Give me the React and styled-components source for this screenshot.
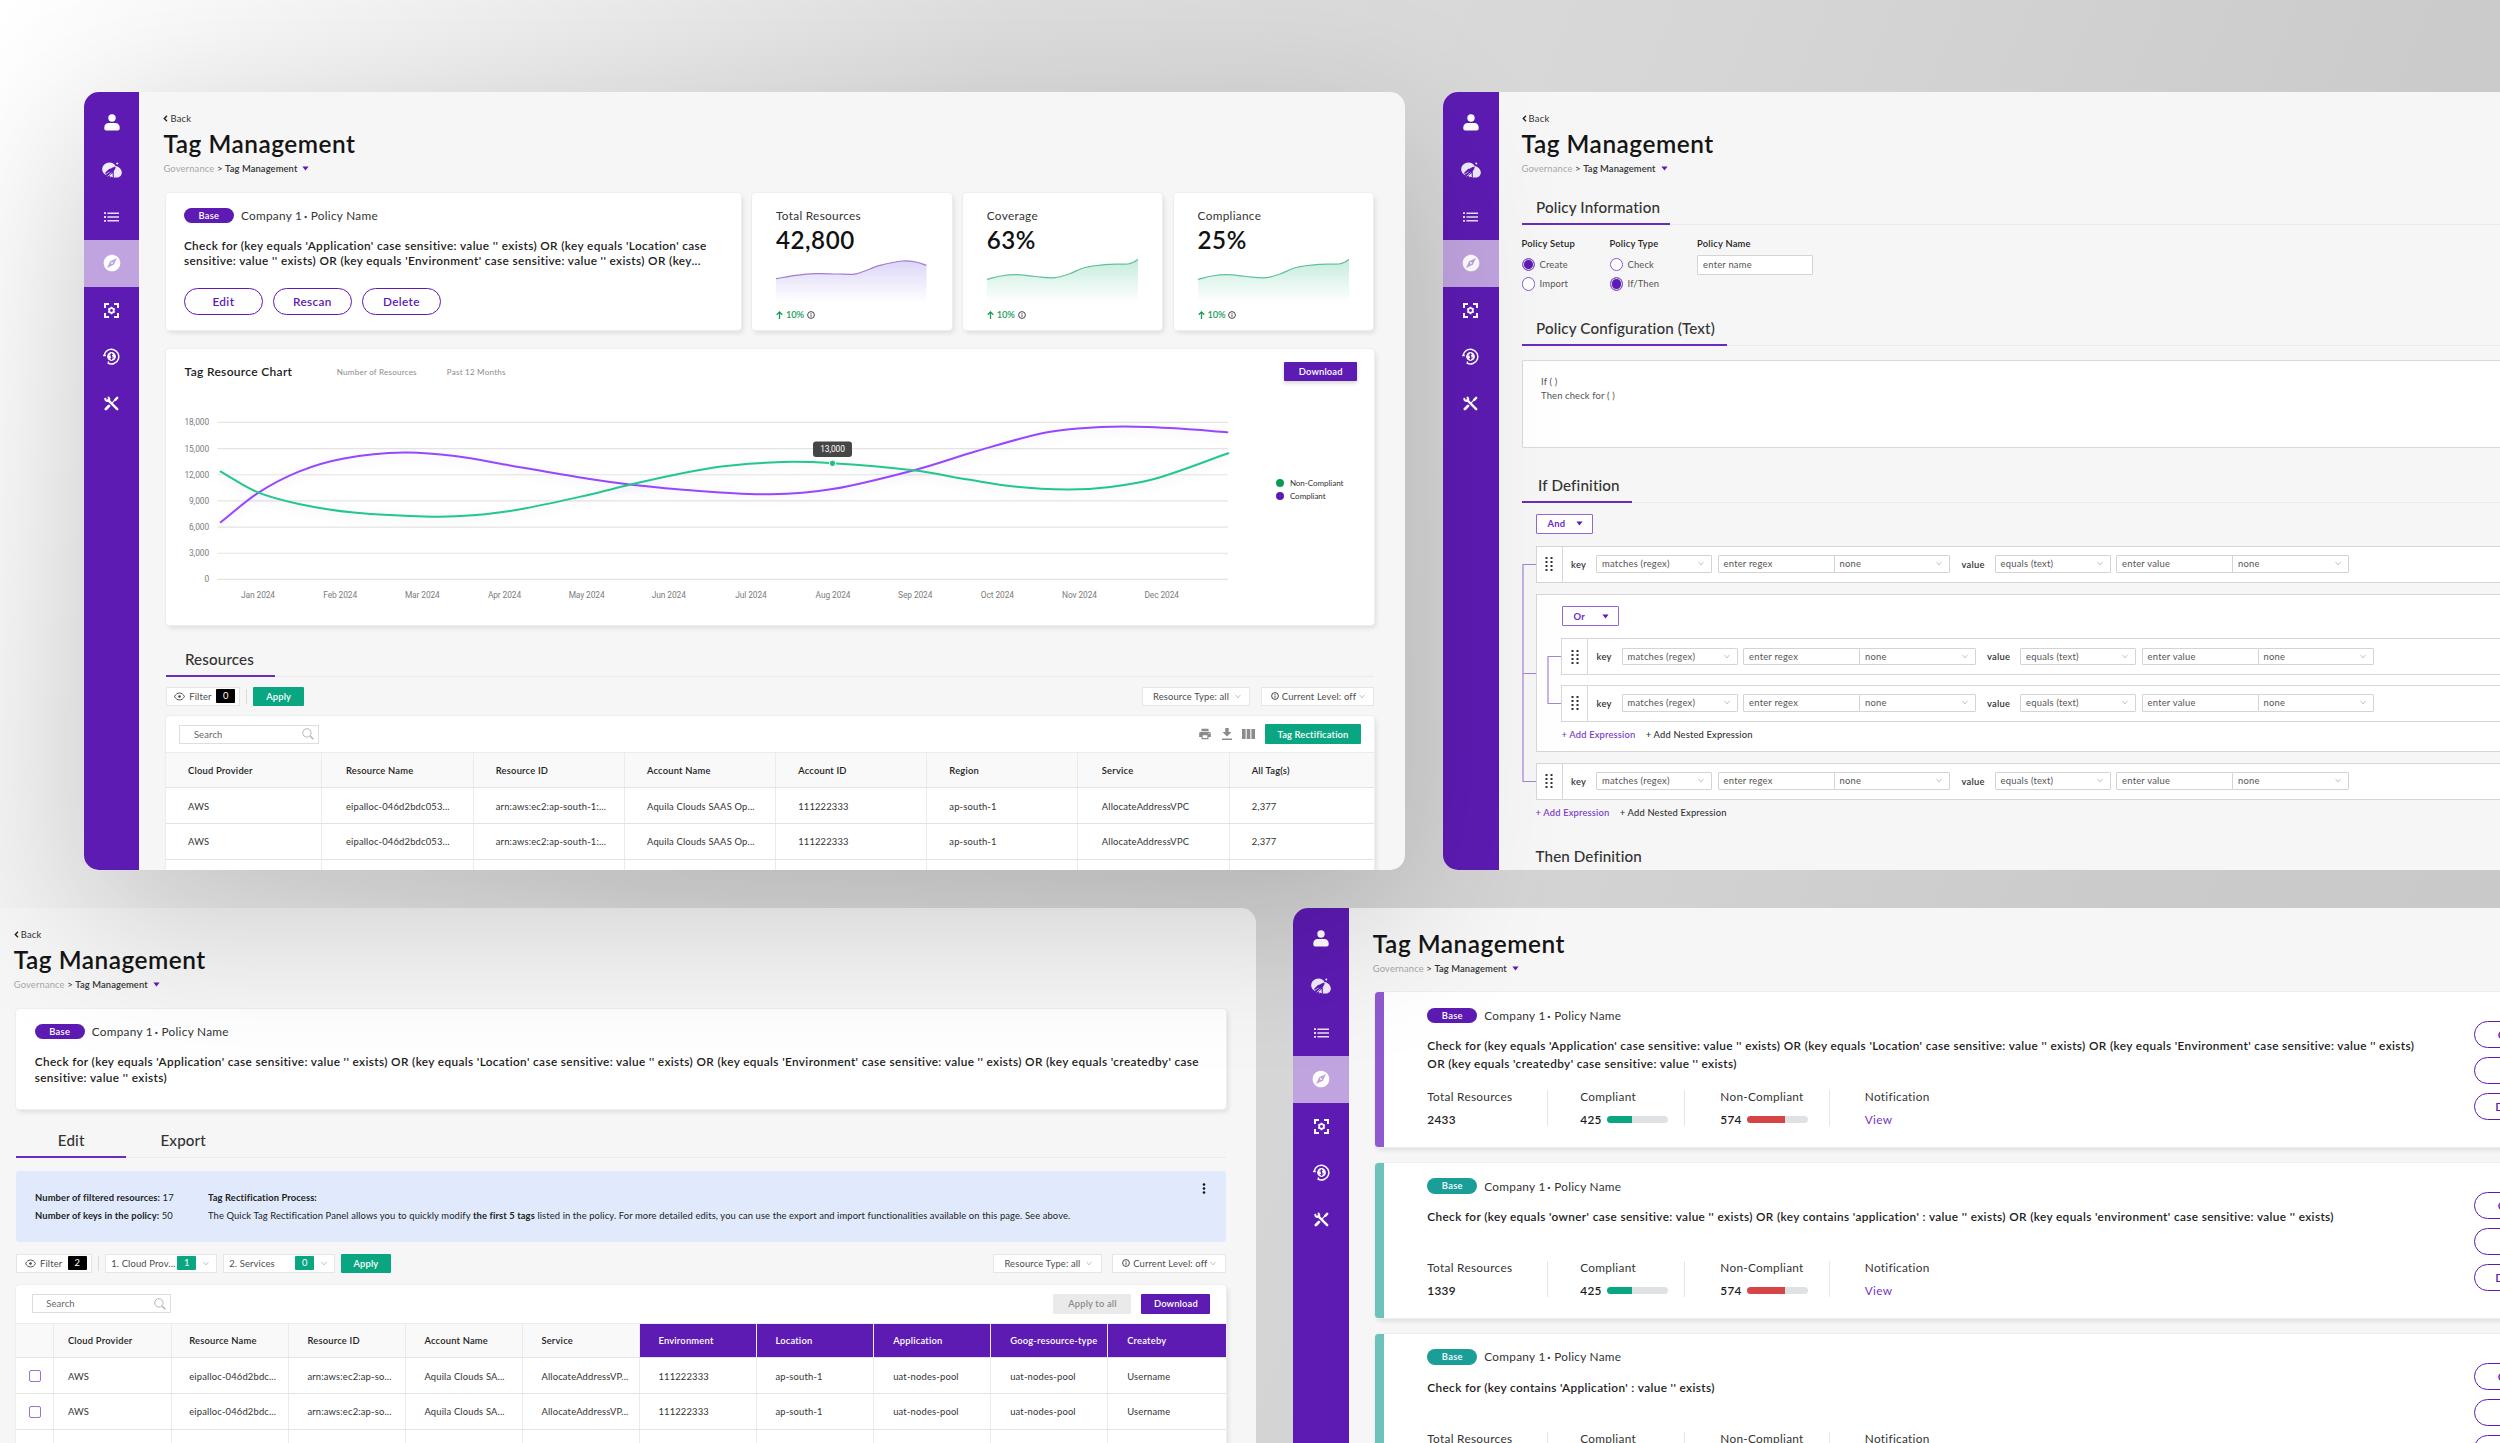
import React from "react";
import styled, { createGlobalStyle, css } from "styled-components";
import { MdExplore, MdPrint } from "react-icons/md";

const PURPLE = "#5d1bb3";
const GREEN = "#0aa682";
const TEAL = "#1b9e98";

const greenTrend = [[0, 23.3], [14, 20], [29, 18.7], [48, 20.5], [68, 21.7], [82, 18], [98, 11.5], [123, 8.3], [141, 8], [147, 6], [151, 3.3]];

const stats = [
  {
    label: "Total Resources",
    value: "42,800",
    id: "total",
    line: "#a07ad6",
    fill: "#dcd6f7",
    points: [[0, 22.7], [20, 19.3], [40, 17.7], [62, 18], [80, 17.8], [103, 9.7], [126, 5], [140, 6], [150.5, 9.3]],
  },
  { label: "Coverage", value: "63%", id: "coverage", line: "#5fc296", fill: "#c5ecdd", points: greenTrend },
  { label: "Compliance", value: "25%", id: "compliance", line: "#5fc296", fill: "#c5ecdd", points: greenTrend },
];

const compliant = [
  [220.7, 523.2], [257.4, 494.3], [298.8, 472.6], [344, 459.5], [404.4, 453.6], [454.9, 457.1], [510, 466.4],
  [588, 479.8], [631.6, 485.7], [693.6, 491.5], [770.5, 495.3], [832.5, 490.1], [915.1, 470.9], [977, 452],
  [1041, 434.5], [1078, 429.4], [1124, 427.5], [1179, 429.5], [1227.3, 433.3],
];
const nonCompliant = [
  [220.7, 472.6], [257.4, 493.2], [298.8, 505], [353.8, 513.6], [432, 517.7], [473, 516.3], [519, 510.5], [588, 496],
  [631.6, 485.3], [675.2, 475.7], [721.2, 467.4], [782, 463], [832.5, 464.3], [915.1, 471.5], [968, 480.5],
  [1014, 487.5], [1066.7, 490.5], [1110.3, 487.9], [1156, 479.5], [1228.3, 454.3],
];
const months = ["Jan", "Feb", "Mar", "Apr", "May", "Jun", "Jul", "Aug", "Sep", "Oct", "Nov", "Dec"];
const ticks = ["18,000", "15,000", "12,000", "9,000", "6,000", "3,000", "0"];

const resourceCols = ["Cloud Provider", "Resource Name", "Resource ID", "Account Name", "Account ID", "Region", "Service", "All Tag(s)"];
const resourceRow = ["AWS", "eipalloc-046d2bdc053...", "arn:aws:ec2:ap-south-1:...", "Aquila Clouds SAAS Op...", "111222333", "ap-south-1", "AllocateAddressVPC", "2,377"];
const resourceRows = [resourceRow, resourceRow, resourceRow.map(() => "")];

const editCols = ["", "Cloud Provider", "Resource Name", "Resource ID", "Account Name", "Service", "Environment", "Location", "Application", "Goog-resource-type", "Createby"];
const editRow = ["", "AWS", "eipalloc-046d2bdc...", "arn:aws:ec2:ap-so...", "Aquila Clouds SA...", "AllocateAddressVP...", "111222333", "ap-south-1", "uat-nodes-pool", "uat-nodes-pool", "Username"];
const editRows = [editRow, editRow, editRow.map(() => "")];

const policies = [
  {
    id: 1,
    tone: PURPLE,
    stripe: "#8f5ad0",
    total: "2433",
    text: "Check for (key equals 'Application' case sensitive: value '' exists) OR (key equals 'Location' case sensitive: value '' exists) OR (key equals 'Environment' case sensitive: value '' exists)\nOR (key equals 'createdby' case sensitive: value '' exists)",
  },
  {
    id: 2,
    tone: TEAL,
    stripe: "#6bc3bb",
    total: "1339",
    text: "Check for (key equals 'owner' case sensitive: value '' exists) OR (key contains 'application' : value '' exists) OR (key equals 'environment' case sensitive: value '' exists)",
  },
  {
    id: 3,
    tone: TEAL,
    stripe: "#6bc3bb",
    total: "1339",
    text: "Check for (key contains 'Application' : value '' exists)",
  },
];

// cubic spline through the points, slopes taken from the neighbours
const smooth = (pts) => {
  const slope = (i) => {
    const a = pts[Math.max(i - 1, 0)];
    const b = pts[Math.min(i + 1, pts.length - 1)];
    return (b[1] - a[1]) / (b[0] - a[0]);
  };
  let d = `M${pts[0][0]},${pts[0][1]}`;
  for (let i = 0; i < pts.length - 1; i++) {
    const [x1, y1] = pts[i];
    const [x2, y2] = pts[i + 1];
    const dx = (x2 - x1) / 3;
    d += ` C${x1 + dx},${y1 + slope(i) * dx} ${x2 - dx},${y2 - slope(i + 1) * dx} ${x2},${y2}`;
  }
  return d;
};

/* ---------- icons ---------- */

const PersonIcon = () => (
  <svg width="16" height="17" viewBox="0 0 16 17" fill="#fff">
    <circle cx="8" cy="4" r="3.7" />
    <path d="M.3 13.3C.3 10.8 2.3 9 4.5 9h7c2.200 0 4.200 1.800 4.200 4.300v1.200c0 1.300-.9 2-2 2H2.300c-1.100 0-2-.7-2-2z" />
  </svg>
);

const CloudRocketIcon = () => (
  <svg width="20" height="16" viewBox="0 0 20 16">
    <path fill="#f1eafa" d="M5.500 13.500C2.500 13 .2 10.400.2 7.300.2 3.400 3.500.4 7.500.4c2.800 0 5 1.300 6 3.500C17 4.600 19.800 7 19.800 10.400c0 3-2.300 5.100-5.200 5.100H12z" />
    <path fill={PURPLE} d="M3.200 10.700 7 7l2-.4c1.500-1.300 3-1.800 4.600-1.800 0 1.500-.6 3-1.900 4.400l.2 6.300H11l-.7-4.300-3.600 3-2-.2L3.500 12z" />
    <path stroke="#f1eafa" strokeWidth="0.7" d="M3.500 12.500l4-2.500M5.500 14.500l4-4M8.300 15.500l2.200-4" />
    <circle cx="15.300" cy="1.500" r="1" fill="#f1eafa" />
  </svg>
);

const ListIcon = () => (
  <svg width="15" height="10" viewBox="0 0 15 10" fill="#e9dff7">
    <path d="M0 .3h2v1.800H0zM0 4.100h2v1.800H0zM0 7.900h2v1.800H0zM3.400.4H15V2H3.400zM3.400 4.200H15v1.600H3.400zM3.400 8H15v1.600H3.400z" />
  </svg>
);

const FocusGearIcon = () => (
  <svg width="15" height="15" viewBox="0 0 15 15" fill="none" stroke="#fff">
    <path strokeWidth="2" d="M1 5V1h4M10 1h4v4M14 10v4h-4M5 14H1v-4" />
    <circle cx="7.500" cy="7.500" r="2.300" strokeWidth="1.700" />
    <path strokeWidth="1.500" d="M7.500 3.700v1.500M7.500 9.800v1.500M4.200 5.600l1.300.75M9.500 8.650l1.300.75M4.200 9.400l1.300-.75M9.500 6.350l1.300-.75" />
  </svg>
);

const CoinIcon = () => (
  <svg width="17" height="17" viewBox="0 0 17 17" fill="none" stroke="#fff">
    <path strokeWidth="1.500" d="M1 7.800A7.400 7.400 0 1 1 5 15.200" />
    <path strokeWidth="1.500" d="M.2 7.600h2.600M5.400 13.600v2.300" />
    <circle cx="8.500" cy="8.500" r="4.400" fill="#fff" stroke="none" />
    <path stroke={PURPLE} strokeWidth="1" d="M10 6.900c-.3-.6-.9-.8-1.500-.8-.8 0-1.500.4-1.500 1.100 0 1.600 3.100.9 3.100 2.500 0 .8-.8 1.200-1.600 1.200-.7 0-1.400-.3-1.600-.9M8.500 5.300v6.500" />
  </svg>
);

const ToolsIcon = () => (
  <svg width="15" height="15" viewBox="0 0 15 15" fill="none" stroke="#fff" strokeLinecap="round">
    <path strokeWidth="2.400" d="M4.200 4.200l9 9" />
    <path strokeWidth="2" d="M1.300 2.800c.2 1.600 1.200 2.500 2.600 2.200 1.400-.3 2-2 .6-3.500" />
    <path strokeWidth="2.800" d="M1.900 13.100l3-3" />
    <path strokeWidth="1.300" d="M8.600 6.400l2.600-2.600" />
    <path strokeWidth="2.400" d="M11.200 3.800l2-2" />
  </svg>
);

const EyeIcon = () => (
  <svg width="11" height="9" viewBox="0 0 11 9" fill="none" stroke="#444" strokeWidth="0.9">
    <path d="M.6 4.500C2.500-.1 8.500-.1 10.400 4.500 8.500 9.100 2.500 9.100.6 4.500z" />
    <circle cx="5.500" cy="4.500" r="1.300" fill="#444" stroke="none" />
  </svg>
);

const InfoIcon = () => (
  <svg width="8" height="8" viewBox="0 0 8 8" fill="none" stroke="#333" strokeWidth="0.9">
    <circle cx="4" cy="4" r="3.400" />
    <path d="M4 3.500v2.300M4 2v.8" />
  </svg>
);

const SearchIcon = () => (
  <svg width="12" height="12" viewBox="0 0 12 12" fill="none" stroke="#b5b5b5" strokeWidth="1">
    <circle cx="4.900" cy="4.900" r="4.200" />
    <path strokeWidth="1.500" d="M8 8l3.300 3.300" />
  </svg>
);

const ChevronIcon = () => (
  <svg width="6" height="5" viewBox="0 0 6 5" fill="none" stroke="#bdbdbd" strokeWidth="0.9">
    <path d="M.5.8L3 4 5.500.8" />
  </svg>
);

const CaretIcon = () => (
  <svg width="7" height="5" viewBox="0 0 7 5" fill={PURPLE}>
    <path d="M.4.4h6.200L3.500 4.500z" />
  </svg>
);

const BackIcon = () => (
  <svg width="5" height="7" viewBox="0 0 5 7" fill="none" stroke="#222" strokeWidth="1.400">
    <path d="M4 .8L1.300 3.500 4 6.200" />
  </svg>
);

const UpIcon = () => (
  <svg width="7" height="8" viewBox="0 0 7 8" fill="none" stroke="#1c9c5b" strokeWidth="1.300">
    <path d="M3.500 8V1M.7 3.700L3.500 1l2.800 2.700" />
  </svg>
);

const DownloadIcon = () => (
  <svg width="10" height="12" viewBox="0 0 10 12" fill="#8b8b8b">
    <path d="M3.300 0h3.400v4H9.500L5 8.600.5 4h2.800zM0 10.500h10V12H0z" />
  </svg>
);

const ColumnsIcon = () => (
  <svg width="13" height="10" viewBox="0 0 13 10" fill="#8b8b8b">
    <path d="M0 0h3.600v10H0zM4.700 0h3.600v10H4.700zM9.400 0H13v10H9.400z" />
  </svg>
);

const GripIcon = () => (
  <svg width="8" height="14" viewBox="0 0 8 14" fill="#333">
    {[1, 5, 9, 13].map((y) => (
      <React.Fragment key={y}>
        <rect x="0.500" y={y - 1} width="2" height="2" />
        <rect x="5.500" y={y - 1} width="2" height="2" />
      </React.Fragment>
    ))}
  </svg>
);

const KebabIcon = () => (
  <svg width="4" height="11" viewBox="0 0 4 11" fill="#111">
    <circle cx="2" cy="1.500" r="1.300" />
    <circle cx="2" cy="5.500" r="1.300" />
    <circle cx="2" cy="9.500" r="1.300" />
  </svg>
);

const Connector = ({ height, stops }) => (
  <svg width="14" height={height} viewBox={`0 0 14 ${height}`} fill="none" stroke="#a583d6" strokeWidth="1.200">
    <path d={`M1 ${stops[0]}V${stops[stops.length - 1]}` + stops.map((y) => `M.4 ${y}H14`).join("")} />
  </svg>
);

/* ---------- shared pieces ---------- */

const Sidebar = () => (
  <Rail>
    <RailItem><PersonIcon /></RailItem>
    <RailItem><CloudRocketIcon /></RailItem>
    <RailItem><ListIcon /></RailItem>
    <RailItem $active><MdExplore size={20} color="#fff" /></RailItem>
    <RailItem><FocusGearIcon /></RailItem>
    <RailItem><CoinIcon /></RailItem>
    <RailItem><ToolsIcon /></RailItem>
  </Rail>
);

const PageHeader = ({ back = true, inset }) => (
  <Header $inset={inset}>
    {back && (
      <Back>
        <BackIcon /> Back
      </Back>
    )}
    <Title>Tag Management</Title>
    <Crumbs>
      <span>Governance</span> &gt; <b>Tag Management</b> <CaretIcon />
    </Crumbs>
  </Header>
);

const PolicyTitle = ({ tone }) => (
  <PolicyHead>
    <Pill $tone={tone}>Base</Pill>
    <span>Company 1<b>&thinsp;·</b> Policy Name</span>
  </PolicyHead>
);

const LevelFilters = () => (
  <Filters $end>
    <Dropdown $width={108.5} $pad={10}>
      Resource Type: all <ChevronIcon />
    </Dropdown>
    <Dropdown $width={113.5} $pad={9}>
      <InfoIcon /> Current Level: off <ChevronIcon />
    </Dropdown>
  </Filters>
);

const Rule = () => (
  <RuleRow>
    <Handle><GripIcon /></Handle>
    <RuleLabel $width={25}>key</RuleLabel>
    <Field $width={116}>matches (regex) <ChevronIcon /></Field>
    <FieldPair>
      <Field $width={117}>enter regex</Field>
      <Field $width={116.5}>none <ChevronIcon /></Field>
    </FieldPair>
    <RuleLabel $width={36}>value</RuleLabel>
    <Field $width={116}>equals (text) <ChevronIcon /></Field>
    <FieldPair>
      <Field $width={117}>enter value</Field>
      <Field $width={116.5}>none <ChevronIcon /></Field>
    </FieldPair>
  </RuleRow>
);

const AddLinks = () => (
  <Links>
    <a>+ Add Expression</a>
    <span>+ Add Nested Expression</span>
  </Links>
);

/* ---------- overview ---------- */

const Sparkline = ({ id, points, line, fill }) => {
  const d = smooth(points);
  return (
    <svg width="151" height="46" viewBox="0 0 151 46">
      <defs>
        <linearGradient id={id} x1="0" y1="0" x2="0" y2="1">
          <stop offset="0" stopColor={fill} />
          <stop offset="1" stopColor="#fff" />
        </linearGradient>
      </defs>
      <path d={`${d} V46 H0 Z`} fill={`url(#${id})`} />
      <path d={d} fill="none" stroke={line} strokeWidth="1.200" />
    </svg>
  );
};

const ResourceChart = () => (
  <svg width="1072" height="230" viewBox="166 390 1072 230">
    {ticks.map((t, i) => (
      <g key={t}>
        <line x1="217.500" x2="1228" y1={423.4 + i * 26.17} y2={423.4 + i * 26.17} stroke="#e4e4e4" strokeWidth="1.200" />
        <ChartLabel x="209" y={426.4 + i * 26.17} textAnchor="end">{t}</ChartLabel>
      </g>
    ))}
    {months.map((m, i) => (
      <ChartLabel key={m} x={258 + i * 82.15} y="599.300" textAnchor="middle">{m} 2024</ChartLabel>
    ))}
    <Curve d={smooth(compliant)} stroke="#9747ff" />
    <Curve d={smooth(nonCompliant)} stroke="#22c78c" />
    <circle cx="832.500" cy="464.300" r="3.200" fill="#1dc186" stroke="#fff" strokeWidth="1" />
    <rect x="813" y="442.500" width="39" height="15.500" rx="3" fill="#464646" />
    <ChartLabel x="832.500" y="453.400" textAnchor="middle" $light>13,000</ChartLabel>
  </svg>
);

const OverviewWindow = () => (
  <Window $width={1320.5} $top>
    <Sidebar />
    <Content>
      <PageHeader />
      <SummaryGrid>
        <Card $pad="14.500px 18px 0">
          <PolicyTitle tone={PURPLE} />
          <PolicyText $lead={15.4}>
            {"Check for (key equals 'Application' case sensitive: value '' exists) OR (key equals 'Location' case\nsensitive: value '' exists) OR (key equals 'Environment' case sensitive: value '' exists) OR (key..."}
          </PolicyText>
          <ButtonRow>
            <OutlineButton>Edit</OutlineButton>
            <OutlineButton>Rescan</OutlineButton>
            <OutlineButton>Delete</OutlineButton>
          </ButtonRow>
        </Card>
        {stats.map((s) => (
          <Card key={s.id} $pad="15px 23.800px 0">
            <StatName>{s.label}</StatName>
            <StatValue>{s.value}</StatValue>
            <Sparkline {...s} />
            <Delta>
              <UpIcon /> 10% <InfoIcon />
            </Delta>
          </Card>
        ))}
      </SummaryGrid>
      <ChartCard>
        <ChartHead>
          <h3>Tag Resource Chart</h3>
          <ChartNote $gap={44.5} $width={110}>Number of Resources</ChartNote>
          <ChartNote $gap={0} $width={80}>Past 12 Months</ChartNote>
          <SolidButton $tone={PURPLE} $width={72.5} $push $raised>Download</SolidButton>
        </ChartHead>
        <ChartBody>
          <ResourceChart />
          <Legend>
            <LegendItem $tone="#0b9b52">Non-Compliant</LegendItem>
            <LegendItem $tone={PURPLE}>Compliant</LegendItem>
          </Legend>
        </ChartBody>
      </ChartCard>
      <Tabs $gap={18}>
        <Tab $active $width={109.5} $pad={19}>Resources</Tab>
      </Tabs>
      <FilterBar $gap={9.5}>
        <Filters>
          <Dropdown $width={74.5} $pad={7.5}>
            <EyeIcon /> <FilterName>Filter</FilterName> <Count $tone="#000">0</Count>
          </Dropdown>
          <Divider />
          <SolidButton $tone={GREEN} $width={50.5}>Apply</SolidButton>
        </Filters>
        <LevelFilters />
      </FilterBar>
      <TableCard $gap={9.8}>
        <TableTools $height={36.5} $pad={13.5}>
          <Search><span>Search</span><SearchIcon /></Search>
          <ToolIcons>
            <MdPrint size={14} color="#8b8b8b" />
            <DownloadIcon />
            <ColumnsIcon />
            <SolidButton $tone={GREEN} $width={96}>Tag Rectification</SolidButton>
          </ToolIcons>
        </TableTools>
        <Row $cols="156.500px repeat(6, 151.200px) 1fr" $head>
          {resourceCols.map((c, i) => <Cell key={c} $head $pad={[1, 6].includes(i) ? 23.5 : 22.2}>{c}</Cell>)}
        </Row>
        {resourceRows.map((row, r) => (
          <Row key={r} $cols="156.500px repeat(6, 151.200px) 1fr">
            {row.map((c, i) => <Cell key={i} $pad={[1, 6].includes(i) ? 23.5 : 22.2}>{c}</Cell>)}
          </Row>
        ))}
      </TableCard>
    </Content>
  </Window>
);

/* ---------- policy form ---------- */

const PolicyFormWindow = () => (
  <Window $width={1320.5}>
    <Sidebar />
    <Content $left={23}>
      <PageHeader inset />
      <Tabs $gap={16}>
        <Tab $active $width={148} $pad={14.5}>Policy Information</Tab>
      </Tabs>
      <FormGrid>
        <FormColumn>
          <FormLabel>Policy Setup</FormLabel>
          <Radio $checked>Create</Radio>
          <Radio>Import</Radio>
        </FormColumn>
        <FormColumn>
          <FormLabel>Policy Type</FormLabel>
          <Radio>Check</Radio>
          <Radio $checked>If/Then</Radio>
        </FormColumn>
        <FormColumn>
          <FormLabel>Policy Name</FormLabel>
          <Field $width={115.5} $height={19.5}>enter name</Field>
        </FormColumn>
      </FormGrid>
      <Tabs>
        <Tab $active $width={205} $pad={14.5}>Policy Configuration (Text)</Tab>
      </Tabs>
      <TextBox>
        If ( )
        <br />
        Then check for ( )
      </TextBox>
      <Tabs $gap={21.5}>
        <Tab $active $width={110.5} $pad={16.5}>If Definition</Tab>
      </Tabs>
      <Indent>
        <LogicSelect>And <CaretIcon /></LogicSelect>
      </Indent>
      <RuleGroup>
        <Connector height={254} stops={[18.5, 127.500, 235.500]} />
        <RuleStack>
          <Rule />
          <NestedBox>
            <LogicSelect>Or <CaretIcon /></LogicSelect>
            <NestedGroup>
              <Connector height={83.5} stops={[18.5, 65.5]} />
              <RuleStack $gap={9.5}>
                <Rule />
                <Rule />
              </RuleStack>
            </NestedGroup>
            <AddLinks />
          </NestedBox>
          <Rule />
        </RuleStack>
      </RuleGroup>
      <Indent $flat>
        <AddLinks />
        <SectionTitle>Then Definition</SectionTitle>
      </Indent>
    </Content>
  </Window>
);

/* ---------- tag rectification ---------- */

const EDIT_GRID = "38.200px 118px repeat(8, 117px) 1fr";
const EDIT_PADS = [12.5, 13.5, 16.8, 18, 18, 18, 18, 18, 18.8, 18.8, 18.8];

const RectificationWindow = () => (
  <Window $width={1321.6}>
    <Sidebar />
    <Content>
      <PageHeader />
      <BannerCard>
        <PolicyTitle tone={PURPLE} />
        <PolicyText $lead={16.6}>
          {"Check for (key equals 'Application' case sensitive: value '' exists) OR (key equals 'Location' case sensitive: value '' exists) OR (key equals 'Environment' case sensitive: value '' exists) OR (key equals 'createdby' case\nsensitive: value '' exists)"}
        </PolicyText>
      </BannerCard>
      <Tabs $gap={15}>
        <Tab $active $width={110} $center>Edit</Tab>
        <Tab $width={114} $center>Export</Tab>
      </Tabs>
      <InfoPanel>
        <div>
          <p><b>Number of filtered resources:</b> 17</p>
          <p><b>Number of keys in the policy:</b> 50</p>
        </div>
        <div>
          <p><b>Tag Rectification Process:</b></p>
          <p>
            The Quick Tag Rectification Panel allows you to quickly modify <b>the first 5 tags</b> listed in the policy. For more detailed edits, you can use the export and import functionalities available on this page. See above.
          </p>
        </div>
        <KebabIcon />
      </InfoPanel>
      <FilterBar $gap={12}>
        <Filters>
          <Dropdown $width={75.5} $pad={7.5}>
            <EyeIcon /> <FilterName>Filter</FilterName> <Count $tone="#000">2</Count>
          </Dropdown>
          <Divider />
          <Dropdown $width={112} $pad={5.5} $wide>
            1. Cloud Prov... <Count $tone={GREEN}>1</Count> <ChevronIcon />
          </Dropdown>
          <Dropdown $width={112} $pad={5.5} $wide>
            2. Services <Count $tone={GREEN}>0</Count> <ChevronIcon />
          </Dropdown>
          <SolidButton $tone={GREEN} $width={50.5}>Apply</SolidButton>
        </Filters>
        <LevelFilters />
      </FilterBar>
      <TableCard $gap={12}>
        <TableTools $height={37.5} $pad={15.5}>
          <Search><span>Search</span><SearchIcon /></Search>
          <ToolIcons>
            <SolidButton $tone="#eaeaea" $ink="#8b8b8b" $width={78}>Apply to all</SolidButton>
            <SolidButton $tone={PURPLE} $width={69}>Download</SolidButton>
          </ToolIcons>
        </TableTools>
        <Row $cols={EDIT_GRID} $head>
          {editCols.map((c, i) => (
            <Cell key={i} $head $accent={i > 5} $pad={EDIT_PADS[i]}>{c}</Cell>
          ))}
        </Row>
        {editRows.map((row, r) => (
          <Row key={r} $cols={EDIT_GRID}>
            {row.map((c, i) => (
              <Cell key={i} $pad={EDIT_PADS[i]}>{i === 0 && r < 2 ? <Checkbox /> : c}</Cell>
            ))}
          </Row>
        ))}
      </TableCard>
    </Content>
  </Window>
);

/* ---------- policy list ---------- */

const PolicyListWindow = () => (
  <Window $width={1321}>
    <Sidebar />
    <Content>
      <PageHeader back={false} />
      <PolicyList>
        {policies.map((p) => (
          <PolicyCard key={p.id} $stripe={p.stripe}>
            <PolicyMain>
              <PolicyTitle tone={p.tone} />
              <PolicyText $lead={18} $lines={2}>{p.text}</PolicyText>
              <PolicyStats>
                <PolicyStat $width={120.5}>
                  Total Resources <b>{p.total}</b>
                </PolicyStat>
                <PolicyStat $width={137.5} $pad={32.5}>
                  Compliant
                  <b>425 <Meter $tone={GREEN} $part={41} /></b>
                </PolicyStat>
                <PolicyStat $width={144.5} $pad={35}>
                  Non-Compliant
                  <b>574 <Meter $tone="#d64545" $part={62} /></b>
                </PolicyStat>
                <PolicyStat $width={120} $pad={35} $last>
                  Notification <a>View</a>
                </PolicyStat>
              </PolicyStats>
            </PolicyMain>
            <PolicyActions>
              <OutlineButton>Clone</OutlineButton>
              <OutlineButton>Edit</OutlineButton>
              <OutlineButton>Delete</OutlineButton>
            </PolicyActions>
          </PolicyCard>
        ))}
      </PolicyList>
    </Content>
  </Window>
);

export default function App() {
  return (
    <>
      <GlobalStyle />
      <Desktop>
        <WindowRow $left={84} $gap={38.7}>
          <OverviewWindow />
          <PolicyFormWindow />
        </WindowRow>
        <WindowRow $left={-65.7} $gap={37.5}>
          <RectificationWindow />
          <PolicyListWindow />
        </WindowRow>
      </Desktop>
    </>
  );
}

/* ---------- styles ---------- */

const GlobalStyle = createGlobalStyle`
  * {
    box-sizing: border-box;
  }

  body {
    margin: 0;
    overflow: hidden;
    font-family: Lato, "Open Sans", sans-serif;
    font-size: 9.4px;
    letter-spacing: 0.15px;
    color: #333;
  }

  h1, h2, h3, p {
    margin: 0;
  }

  svg {
    display: block;
    flex: none;
  }
`;

const Desktop = styled.main`
  display: flex;
  flex-direction: column;
  gap: 38px;
  width: 2500px;
  height: 1443px;
  padding-top: 92px;
  overflow: hidden;
  background: linear-gradient(112deg, #fff 0%, #dddddd 33%, #d6d6d6 56%, #cbcbcb 80%, #c8c8c8 100%);
`;

const WindowRow = styled.div`
  display: flex;
  flex: none;
  gap: ${(p) => p.$gap}px;
  margin-left: ${(p) => p.$left}px;
`;

const Window = styled.section`
  display: flex;
  flex: none;
  position: relative;
  width: ${(p) => p.$width}px;
  height: 778px;
  border-radius: 15px;
  overflow: hidden;
  background: #f6f6f6;
  ${(p) =>
    p.$top &&
    css`
      z-index: 2;
      box-shadow: 0 45px 160px rgba(0, 0, 0, 0.18);
    `}
`;

const Rail = styled.nav`
  flex: none;
  width: 55.4px;
  padding-top: 7.6px;
  background: ${PURPLE};
`;

const RailItem = styled.div`
  display: flex;
  align-items: center;
  justify-content: center;
  height: 46.8px;
  background: ${(p) => (p.$active ? "#c0a4e0" : "transparent")};
`;

const Content = styled.div`
  flex: none;
  width: calc(100% - 55.4px);
  padding: 18px 30px 0 ${(p) => p.$left || 26.5}px;
`;

const Header = styled.header`
  margin-left: ${(p) => (p.$inset ? 0 : -2.5)}px;
`;

const Back = styled.div`
  display: flex;
  align-items: center;
  gap: 2px;
  height: 16px;
  letter-spacing: 0.25px;
`;

const Title = styled.h1`
  height: 36px;
  line-height: 36px;
  font-size: 24.4px;
  font-weight: 600;
  letter-spacing: 0.52px;
  color: #151515;
`;

const Crumbs = styled.div`
  display: flex;
  align-items: center;
  gap: 2.5px;
  height: 13px;
  margin-bottom: 1px;

  span {
    color: #a8a8a8;
  }

  b {
    font-weight: 600;
    letter-spacing: 0.1px;
    margin-right: 2.5px;
  }
`;

const panel = css`
  background: #fff;
  border-radius: 3.5px;
  box-shadow: 0 0 0 1px #eeeeee, 2px 3px 5px rgba(0, 0, 0, 0.1);
`;

const Card = styled.div`
  ${panel}
  display: flex;
  flex-direction: column;
  padding: ${(p) => p.$pad};
`;

const SummaryGrid = styled.div`
  display: grid;
  grid-template-columns: 575px repeat(3, 199.5px);
  grid-template-rows: 137px;
  gap: 11.3px;
  margin-top: 18px;
`;

const PolicyHead = styled.div`
  display: flex;
  align-items: center;
  gap: 7px;
  height: 16px;
  font-size: 11.8px;
  letter-spacing: 0.28px;
`;

const Pill = styled.span`
  width: 50px;
  height: 15.5px;
  border-radius: 8px;
  line-height: 15px;
  font-size: 9.4px;
  font-weight: 600;
  text-align: center;
  color: #fff;
  background: ${(p) => p.$tone};
`;

const PolicyText = styled.p`
  min-height: ${(p) => (p.$lines || 0) * p.$lead}px;
  margin-top: 14px;
  line-height: ${(p) => p.$lead}px;
  font-size: 11.8px;
  font-weight: 600;
  letter-spacing: 0.365px;
  white-space: pre;
  color: #1d1d1d;
`;

const ButtonRow = styled.div`
  display: flex;
  gap: 10px;
  margin-top: 20px;
`;

const OutlineButton = styled.button`
  flex: none;
  width: 79px;
  height: 27px;
  padding: 0;
  border: 1.6px solid ${PURPLE};
  border-radius: 14px;
  background: #fff;
  font: 600 11.8px Lato, sans-serif;
  letter-spacing: 0.35px;
  color: ${PURPLE};
`;

const StatName = styled.div`
  height: 15px;
  line-height: 15px;
  font-size: 11.8px;
  letter-spacing: 0.3px;
`;

const StatValue = styled.div`
  height: 33px;
  line-height: 34px;
  font-size: 24.2px;
  font-weight: 600;
  letter-spacing: 0.5px;
  color: #111;
`;

const Delta = styled.div`
  display: flex;
  align-items: center;
  gap: 3px;
  height: 12px;
  margin-top: 6.5px;
  font-weight: 600;
  letter-spacing: -0.2px;
  color: #1c9c5b;
`;

const ChartCard = styled.div`
  ${panel}
  height: 276.5px;
  margin-top: 18.7px;
`;

const ChartHead = styled.div`
  display: flex;
  align-items: center;
  height: 40.3px;
  padding: 5.5px 17.5px 0 18.7px;

  h3 {
    font-size: 12px;
    font-weight: 600;
    letter-spacing: 0.3px;
    color: #1d1d1d;
  }
`;

const ChartNote = styled.span`
  width: ${(p) => p.$width}px;
  margin-left: ${(p) => p.$gap}px;
  font-size: 8.1px;
  letter-spacing: 0.2px;
  color: #8c8c8c;
`;

const ChartBody = styled.div`
  display: flex;
  align-items: center;
`;

const ChartLabel = styled.text`
  font-family: Roboto, sans-serif;
  font-size: 8.4px;
  letter-spacing: -0.1px;
  fill: ${(p) => (p.$light ? "#fff" : "#7c7c7c")};
`;

const Curve = styled.path`
  fill: none;
  stroke-width: 2px;
  stroke-linecap: round;
  filter: drop-shadow(0 3px 4px rgba(90, 60, 160, 0.14));
`;

const Legend = styled.div`
  display: flex;
  flex-direction: column;
  gap: 1.5px;
  margin: -29px 0 0 38px;
`;

const LegendItem = styled.div`
  display: flex;
  align-items: center;
  gap: 6px;
  height: 12px;
  font-size: 8px;
  letter-spacing: -0.03px;

  &::before {
    content: "";
    width: 8px;
    height: 8px;
    border-radius: 50%;
    background: ${(p) => p.$tone};
  }
`;

const SolidButton = styled.button`
  flex: none;
  width: ${(p) => p.$width}px;
  height: 19.5px;
  margin-left: ${(p) => (p.$push ? "auto" : 0)};
  padding: 0;
  border: 0;
  border-radius: 1px;
  background: ${(p) => p.$tone};
  box-shadow: ${(p) => (p.$raised ? "0 2px 4px rgba(0, 0, 0, 0.18)" : "none")};
  font: 600 9.4px Lato, sans-serif;
  letter-spacing: 0.15px;
  color: ${(p) => p.$ink || "#fff"};
`;

const Tabs = styled.div`
  display: flex;
  height: 34px;
  margin-top: ${(p) => p.$gap || 0}px;
  border-bottom: 1px solid #ebebeb;
`;

const Tab = styled.div`
  width: ${(p) => p.$width}px;
  height: 34px;
  padding-left: ${(p) => p.$pad || 0}px;
  border-bottom: 2px solid ${(p) => (p.$active ? "#6a2bc0" : "transparent")};
  line-height: 33px;
  font-size: 15.2px;
  font-weight: 500;
  letter-spacing: 0.13px;
  white-space: nowrap;
  text-align: ${(p) => (p.$center ? "center" : "left")};
`;

const FilterBar = styled.div`
  display: flex;
  justify-content: space-between;
  margin-top: ${(p) => p.$gap}px;
`;

const Filters = styled.div`
  display: flex;
  align-items: center;
  gap: ${(p) => (p.$end ? 10.5 : 6)}px;
`;

const Dropdown = styled.div`
  display: flex;
  align-items: center;
  justify-content: space-between;
  width: ${(p) => p.$width}px;
  height: 19.5px;
  padding: 0 ${(p) => (p.$wide ? 7 : p.$width < 90 ? 4 : 8.5)}px 0 ${(p) => p.$pad}px;
  border: 1px solid #e6e6e6;
  background: #fff;
  color: #4c4c4c;
`;

const FilterName = styled.span`
  margin: 0 4px 0 3px;
`;

const Count = styled.span`
  width: 19px;
  height: 14px;
  line-height: 14px;
  border-radius: 1px;
  text-align: center;
  color: #fff;
  background: ${(p) => p.$tone};

  &:nth-last-child(2) {
    margin-left: auto;
    margin-right: 6.5px;
  }
`;

const Divider = styled.i`
  width: 1px;
  height: 15px;
  background: #dcdcdc;
`;

const TableCard = styled.div`
  ${panel}
  margin-top: ${(p) => p.$gap}px;
  overflow: hidden;
`;

const TableTools = styled.div`
  display: flex;
  align-items: center;
  justify-content: space-between;
  height: ${(p) => p.$height}px;
  padding: 0 ${(p) => p.$pad}px;
`;

const Search = styled.div`
  display: flex;
  align-items: center;
  justify-content: space-between;
  width: 139.5px;
  height: 19px;
  padding: 0 4px 0 13.5px;
  border: 1px solid #dedede;
  color: #666;
`;

const ToolIcons = styled.div`
  display: flex;
  align-items: center;
  gap: 10px;
`;

const Row = styled.div`
  display: grid;
  grid-template-columns: ${(p) => p.$cols};
  height: 35.8px;
  border-bottom: 1px solid #e4e4e4;
  border-top: ${(p) => (p.$head ? "1px solid #ececec" : 0)};
`;

const Cell = styled.div`
  display: flex;
  align-items: center;
  padding: 1px 0 0 ${(p) => p.$pad}px;
  border-right: 1px solid #ebebeb;
  white-space: nowrap;
  letter-spacing: 0.18px;

  ${(p) =>
    p.$head &&
    css`
      background: ${p.$accent ? PURPLE : "#f9f9f9"};
      color: ${p.$accent ? "#fff" : "#222"};
      font-weight: 600;
      letter-spacing: 0.2px;
    `}

  &:last-child {
    border-right: 0;
  }
`;

const Checkbox = styled.span`
  width: 12px;
  height: 12px;
  border: 1px solid #9a72d4;
  border-radius: 2px;
`;

const FormGrid = styled.div`
  display: grid;
  grid-template-columns: 88px 87.5px 1fr;
  height: 86.5px;
  padding-top: 12px;
`;

const FormColumn = styled.div`
  display: flex;
  flex-direction: column;
`;

const FormLabel = styled.div`
  height: 14px;
  margin-bottom: 4px;
  line-height: 14px;
  font-weight: 600;
  letter-spacing: 0.2px;
  color: #222;
`;

const Radio = styled.div`
  display: flex;
  align-items: center;
  gap: 4.5px;
  height: 19.3px;
  color: #555;

  &::before {
    content: "";
    width: 11.5px;
    height: 11.5px;
    border: 1px solid #8a5bcd;
    border-radius: 50%;
    background: ${(p) => (p.$checked ? PURPLE : "#fff")};
    box-shadow: ${(p) => (p.$checked ? "inset 0 0 0 1px #d9c8f0" : "none")};
  }
`;

const Field = styled.div`
  display: flex;
  align-items: center;
  justify-content: space-between;
  flex: none;
  width: ${(p) => p.$width}px;
  height: ${(p) => p.$height || 17.5}px;
  padding: 0 7px 1px 5px;
  border: 1px solid #d4d4d4;
  border-radius: 1px;
  background: #fff;
  color: #555;
  letter-spacing: 0.22px;
`;

const FieldPair = styled.div`
  display: flex;
  margin-left: 5.5px;

  ${Field} + ${Field} {
    margin-left: -1px;
  }
`;

const TextBox = styled.div`
  width: 1232px;
  height: 87.5px;
  margin-top: 14.5px;
  padding: 14px 18.5px;
  border: 1px solid #d9d9d9;
  border-radius: 1px;
  background: #fff;
  line-height: 13.8px;
  letter-spacing: 0.15px;
  color: #555;
`;

const Indent = styled.div`
  padding: ${(p) => (p.$flat ? 0 : 10.5)}px 0 0 14px;
`;

const LogicSelect = styled.div`
  display: flex;
  align-items: center;
  justify-content: space-between;
  width: 57.5px;
  height: 20px;
  padding: 0 9.5px 0 11px;
  border: 1px solid #9467d3;
  border-radius: 1px;
  background: #fff;
  font-weight: 700;
  color: #6b2cc2;
`;

const RuleGroup = styled.div`
  display: flex;
  margin-top: 12px;
`;

const RuleStack = styled.div`
  display: flex;
  flex-direction: column;
  flex: 1;
  gap: ${(p) => p.$gap || 11}px;
`;

const RuleRow = styled.div`
  display: flex;
  align-items: center;
  height: 37px;
  border: 1px solid #d6d6d6;
  background: #fff;
`;

const Handle = styled.div`
  display: flex;
  align-items: center;
  justify-content: center;
  width: 26px;
  height: 100%;
  margin-right: 8.5px;
  border-right: 1px solid #d6d6d6;
`;

const RuleLabel = styled.span`
  width: ${(p) => p.$width}px;
  font-weight: 600;
  letter-spacing: 0.2px;

  ${FieldPair} + & {
    width: 44.5px;
    padding-left: 11.5px;
  }
`;

const NestedBox = styled.div`
  height: 158px;
  padding: 11.5px 0 0 25px;
  border: 1px solid #d6d6d6;
  background: #fff;
`;

const NestedGroup = styled.div`
  display: flex;
  margin: 12px 0 0 -14.5px;
`;

const Links = styled.div`
  display: flex;
  gap: 10.5px;
  height: 14px;
  margin-top: 6px;
  line-height: 14px;
  font-weight: 500;

  a {
    color: #7534ca;
  }
`;

const SectionTitle = styled.h2`
  height: 20px;
  margin-top: 26px;
  line-height: 20px;
  font-size: 15.2px;
  font-weight: 500;
  letter-spacing: 0.1px;
`;

const BannerCard = styled.div`
  ${panel}
  height: 100px;
  margin-top: 18px;
  padding: 14.5px 18.5px 0;
`;

const InfoPanel = styled.div`
  display: grid;
  grid-template-columns: 173px 1fr 4px;
  height: 71px;
  margin-top: 12.5px;
  padding: 18.5px 20px 0 18.8px;
  border-radius: 3px;
  background: #e1eafc;
  line-height: 17.8px;
  letter-spacing: 0.11px;
  color: #222;

  svg {
    margin-top: -6.500px;
  }
`;

const PolicyList = styled.div`
  display: flex;
  flex-direction: column;
  gap: 15.7px;
  margin-top: 17.2px;
`;

const PolicyCard = styled.article`
  ${panel}
  display: flex;
  flex: none;
  height: 155px;
  border-left: 9px solid ${(p) => p.$stripe};
  padding-left: 43px;
`;

const PolicyMain = styled.div`
  flex: none;
  width: 1047px;
  padding-top: 15.3px;
`;

const PolicyStats = styled.div`
  display: flex;
  height: 36px;
  margin-top: 17px;
`;

const PolicyStat = styled.div`
  display: flex;
  flex-direction: column;
  justify-content: space-between;
  width: ${(p) => p.$width}px;
  padding-left: ${(p) => p.$pad || 0}px;
  border-right: ${(p) => (p.$last ? 0 : "1px solid #e6e6e6")};
  font-size: 11.8px;
  line-height: 13px;
  letter-spacing: 0.3px;

  b {
    display: flex;
    align-items: center;
    gap: 5px;
    font-weight: 600;
    color: #1d1d1d;
  }

  a {
    color: #7534ca;
  }
`;

const Meter = styled.i`
  width: 61.5px;
  height: 7px;
  border-radius: 4px;
  background: linear-gradient(90deg, ${(p) => p.$tone} ${(p) => p.$part}%, #dfe2e5 ${(p) => p.$part}%);
`;

const PolicyActions = styled.div`
  display: flex;
  flex-direction: column;
  gap: 9px;
  padding-top: 29px;
`;
